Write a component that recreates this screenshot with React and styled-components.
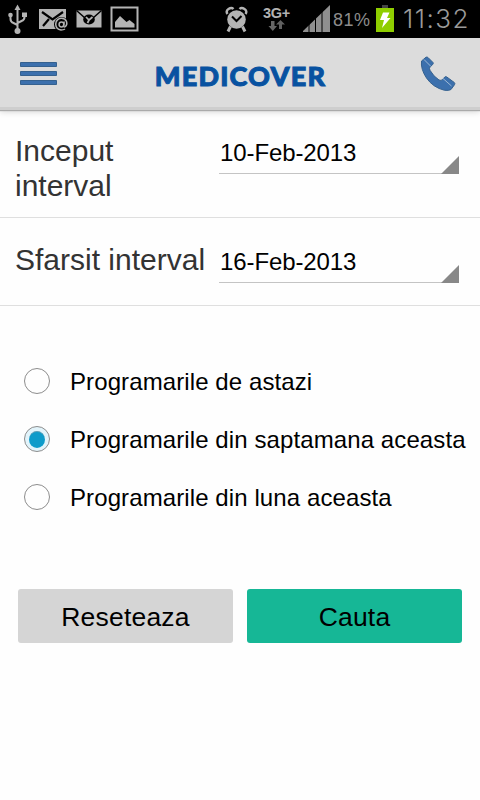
import React, { useState } from 'react';
import styled, { createGlobalStyle } from 'styled-components';

const GlobalStyle = createGlobalStyle`
    * {
        box-sizing: border-box;
    }

    body {
        margin: 0;
        background-color: #fefefe;
        font-family: "Liberation Sans", Arial, sans-serif;
    }
`;

const Screen = styled.div`
    width: 480px;
    height: 800px;
    overflow: hidden;
    background-color: #fefefe;
`;

const StatusBar = styled.div`
    height: 38px;
    display: flex;
    justify-content: space-between;
    background-color: #000;
    color: #999;
`;

const StatusGroup = styled.div`
    display: flex;

    svg {
        display: block;
    }
`;

const Network = styled.div`
    width: 28px;
    margin: 5px 12px 0 15px;
    font-size: 14.5px;
    font-weight: 700;
    line-height: 17px;
    letter-spacing: -0.3px;
    color: #b2b2b2;
    white-space: nowrap;

    svg {
        margin: -2px 0 0 5px;
    }
`;

const Percent = styled.span`
    width: 43px;
    padding-left: 1px;
    font-size: 18px;
    line-height: 40px;
    letter-spacing: 0.5px;
    color: #8c8c8c;
`;

const Clock = styled.span`
    width: 77px;
    font-family: Inter, "Liberation Sans", sans-serif;
    font-size: 26px;
    font-weight: 300;
    line-height: 38px;
    letter-spacing: 1.5px;
    color: #9a9a9a;
`;

const Header = styled.header`
    height: 72px;
    padding: 3px 24px 0 20px;
    display: flex;
    justify-content: space-between;
    align-items: center;
    background-color: #dcdcdc;
    border-bottom: 3px solid #cecece;
    box-shadow: 0 1px 1px #aaa, 0 2px 6px rgba(0, 0, 0, 0.16);
`;

const IconButton = styled.button`
    padding: 0;
    border: 0;
    background: none;

    svg {
        display: block;
    }
`;

const Brand = styled.h1`
    margin: 4px 0 0 3px;
    font-family: Lato, sans-serif;
    font-size: 27px;
    font-weight: 900;
    line-height: 34px;
    letter-spacing: 1.2px;
    color: #0852a1;
    -webkit-text-stroke: 1px #0852a1;
`;

const Row = styled.div`
    height: ${(props) => props.$height}px;
    padding: ${(props) => props.$top}px 21px 0 15px;
    display: flex;
    align-items: flex-start;
    border-bottom: 1px solid #dfdfdf;
`;

const Label = styled.label`
    width: 204px;
    margin-top: -1px;
    padding-right: 10px;
    font-size: 30px;
    line-height: 35px;
    color: #333;
`;

const Spinner = styled.div`
    width: 240px;
    height: 40px;
    padding-left: 1px;
    display: flex;
    justify-content: space-between;
    align-items: flex-end;
    border-bottom: 1px solid #c4c4c4;
    font-size: 24px;
    line-height: 40px;
    letter-spacing: -0.1px;
    color: #000;
`;

const Corner = styled.span`
    width: 18px;
    height: 18px;
    margin-bottom: -1px;
    background-color: #888;
    clip-path: polygon(100% 0, 100% 100%, 0 100%);
`;

const Options = styled.div`
    padding: 46px 0 0 24px;
`;

const Option = styled.div`
    height: 58px;
    display: flex;
    align-items: center;
    font-size: 24px;
    letter-spacing: 0.1px;
    color: #000;
    white-space: nowrap;
`;

const OptionText = styled.span`
    padding-top: 2px;
`;

const Radio = styled.span`
    width: 26px;
    height: 26px;
    margin-right: 20px;
    display: flex;
    justify-content: center;
    align-items: center;
    border: 1px solid #8d8d8d;
    border-radius: 50%;
    background-color: ${(props) => (props.$checked ? '#e2f4fb' : '#fefefe')};

    &::after {
        content: '';
        width: 16px;
        height: 16px;
        border-radius: 50%;
        border-top: 1px solid #5d9db5;
        background-color: #0d9bca;
        display: ${(props) => (props.$checked ? 'block' : 'none')};
    }
`;

const Actions = styled.div`
    margin-top: 63px;
    padding: 0 18px;
    display: flex;
    gap: 14px;
`;

const Button = styled.button`
    flex: 1;
    height: 54px;
    padding: 2px 0 0;
    border: 0;
    border-radius: 3px;
    background-color: ${(props) => (props.$primary ? '#16b796' : '#d5d5d5')};
    font-family: inherit;
    font-size: 26.5px;
    letter-spacing: 0.2px;
    color: #000;
`;

const options = [
    { id: 'day', text: 'Programarile de astazi' },
    { id: 'week', text: 'Programarile din saptamana aceasta' },
    { id: 'month', text: 'Programarile din luna aceasta' },
];

const Notifications = () => (
    <svg width="145" height="38" viewBox="0 0 145 38" fill="#b4b4b4">
        <path d="M17.5 4.5l3 5.500h-6z" />
        <circle cx="17.500" cy="31" r="3" />
        <path d="M17.500 9v20M10.500 15v4q0 3 3 4l4 2M24.500 14v3q0 3-3 4l-4 2" fill="none" stroke="#b4b4b4" strokeWidth="2" />
        <circle cx="10.500" cy="15" r="2.300" />
        <path d="M22 12.500h5v4.500h-5z" />

        <path d="M39 9h27v20H39z" />
        <path d="M42 12l10.500 7.500L63 12M43 26l6-7" fill="none" stroke="#000" strokeWidth="2.200" />
        <circle cx="61.500" cy="24.500" r="7.500" fill="#000" />
        <circle cx="61.500" cy="24.500" r="2.400" fill="none" stroke="#b4b4b4" strokeWidth="1.500" />
        <path d="M64.200 21.500l-.7 4.500q.5 1.500 2 .5 2-2 1-5-1.500-3.500-5.500-3.200-5 .7-5.300 6 .3 5 5.300 5.700 2.500 0 4-1" fill="none" stroke="#b4b4b4" strokeWidth="1.500" />

        <path d="M76.500 10.500h25v17h-25z" />
        <path d="M76.500 10.500L85 18M101.500 10.500L93 18" fill="none" stroke="#000" strokeWidth="1.500" />
        <ellipse cx="89" cy="19.500" rx="5.800" ry="5" fill="#000" />
        <path d="M86 17l3 3 3.500-3M89 20l-1.500 3" fill="none" stroke="#b4b4b4" strokeWidth="1.700" />

        <path d="M111.500 7.500h26v23h-26z" fill="none" stroke="#b4b4b4" strokeWidth="2" />
        <path d="M115 27.500V22l5-6 6.500 6 3-2 5 4v3.500z" />
    </svg>
);

const Alarm = () => (
    <svg width="23" height="38" viewBox="0 0 23 38">
        <path d="M2.500 14q-2-3 1-5 3-2 5 0M20.500 14q2-3-1-5-3-2-5 0" fill="none" stroke="#b4b4b4" strokeWidth="2.400" />
        <circle cx="11.500" cy="19.500" r="9.300" fill="#b4b4b4" />
        <path d="M5.500 26.500l-2.500 5M17.500 26.500l2.500 5" stroke="#b4b4b4" strokeWidth="3" />
        <path d="M7 16.500l4.500 4.500 5-5" fill="none" stroke="#000" strokeWidth="2" />
    </svg>
);

const Arrows = () => (
    <svg width="18" height="12" viewBox="0 0 18 12">
        <path d="M3 1h3.500v5H9l-4.200 5L.5 6H3z" fill="#666" />
        <path d="M12.500 0l4.500 4.500h-3V9h-3V4.500H8z" fill="#606060" />
    </svg>
);

const Signal = () => (
    <svg width="29" height="38" viewBox="0 0 29 38">
        <path d="M-1 32L27 5v27z" fill="#8f8f8f" />
        <path d="M6 5v27M12.500 5v27M19 5v27" stroke="#000" strokeWidth="1" />
    </svg>
);

const Battery = () => (
    <svg width="28" height="38" viewBox="0 0 28 38">
        <path d="M7 5h6v3H7z" fill="#444" />
        <path d="M1 8h18v24H1z" fill="#8fce00" />
        <path d="M8 12.500h6.500L12 18h3.500L7 28l2-8H5z" fill="#fff" />
    </svg>
);

const MenuIcon = () => (
    <svg width="38" height="26" viewBox="0 0 38 26" fill="#3c70ad" stroke="#35618f" strokeWidth="1">
        <path d="M.5 1.500h36v4H.5zM.5 10.500h36v4H.5zM.5 19.500h36v4H.5z" />
    </svg>
);

const PhoneIcon = () => (
    <svg width="36" height="36" viewBox="0 0 36 36">
        <path
            d="M1.500 5L6 1.200q1.200-.5 2.200.5L13 6.500q.7 1-.3 2L10 11q-1 1.300 0 3.300 3.500 6.200 9 9.700 2.300 1 3.500-.5l2.300-2.500q1-.8 2 0l7.500 5.500q1 1 .2 2.200L31 33.500q-2 1.300-6.500.8Q13 31.500 6.500 22 .5 13 1.500 5z"
            fill="#3c70ad"
            stroke="#35618f"
        />
        <path d="M4 3.500l7 7M23 22.500l8.500 7.500" stroke="#9eb9d6" strokeWidth="1" />
    </svg>
);

const DateRow = ({ label, value, height, top }) => (
    <Row $height={height} $top={top}>
        <Label>{label}</Label>
        <Spinner>
            <span>{value}</span>
            <Corner />
        </Spinner>
    </Row>
);

export default function App() {
    const [selected, setSelected] = useState('week');

    return (
        <Screen>
            <GlobalStyle />
            <StatusBar>
                <StatusGroup>
                    <Notifications />
                </StatusGroup>
                <StatusGroup>
                    <Alarm />
                    <Network>
                        3G+
                        <Arrows />
                    </Network>
                    <Signal />
                    <Percent>81%</Percent>
                    <Battery />
                    <Clock>11:32</Clock>
                </StatusGroup>
            </StatusBar>
            <Header>
                <IconButton aria-label="Meniu">
                    <MenuIcon />
                </IconButton>
                <Brand>MEDICOVER</Brand>
                <IconButton aria-label="Telefon">
                    <PhoneIcon />
                </IconButton>
            </Header>
            <DateRow label="Inceput interval" value="10-Feb-2013" height={108} top={24} />
            <DateRow label="Sfarsit interval" value="16-Feb-2013" height={88} top={25} />
            <Options>
                {options.map((option) => (
                    <Option key={option.id} onClick={() => setSelected(option.id)}>
                        <Radio $checked={selected === option.id} />
                        <OptionText>{option.text}</OptionText>
                    </Option>
                ))}
            </Options>
            <Actions>
                <Button>Reseteaza</Button>
                <Button $primary>Cauta</Button>
            </Actions>
        </Screen>
    );
}
